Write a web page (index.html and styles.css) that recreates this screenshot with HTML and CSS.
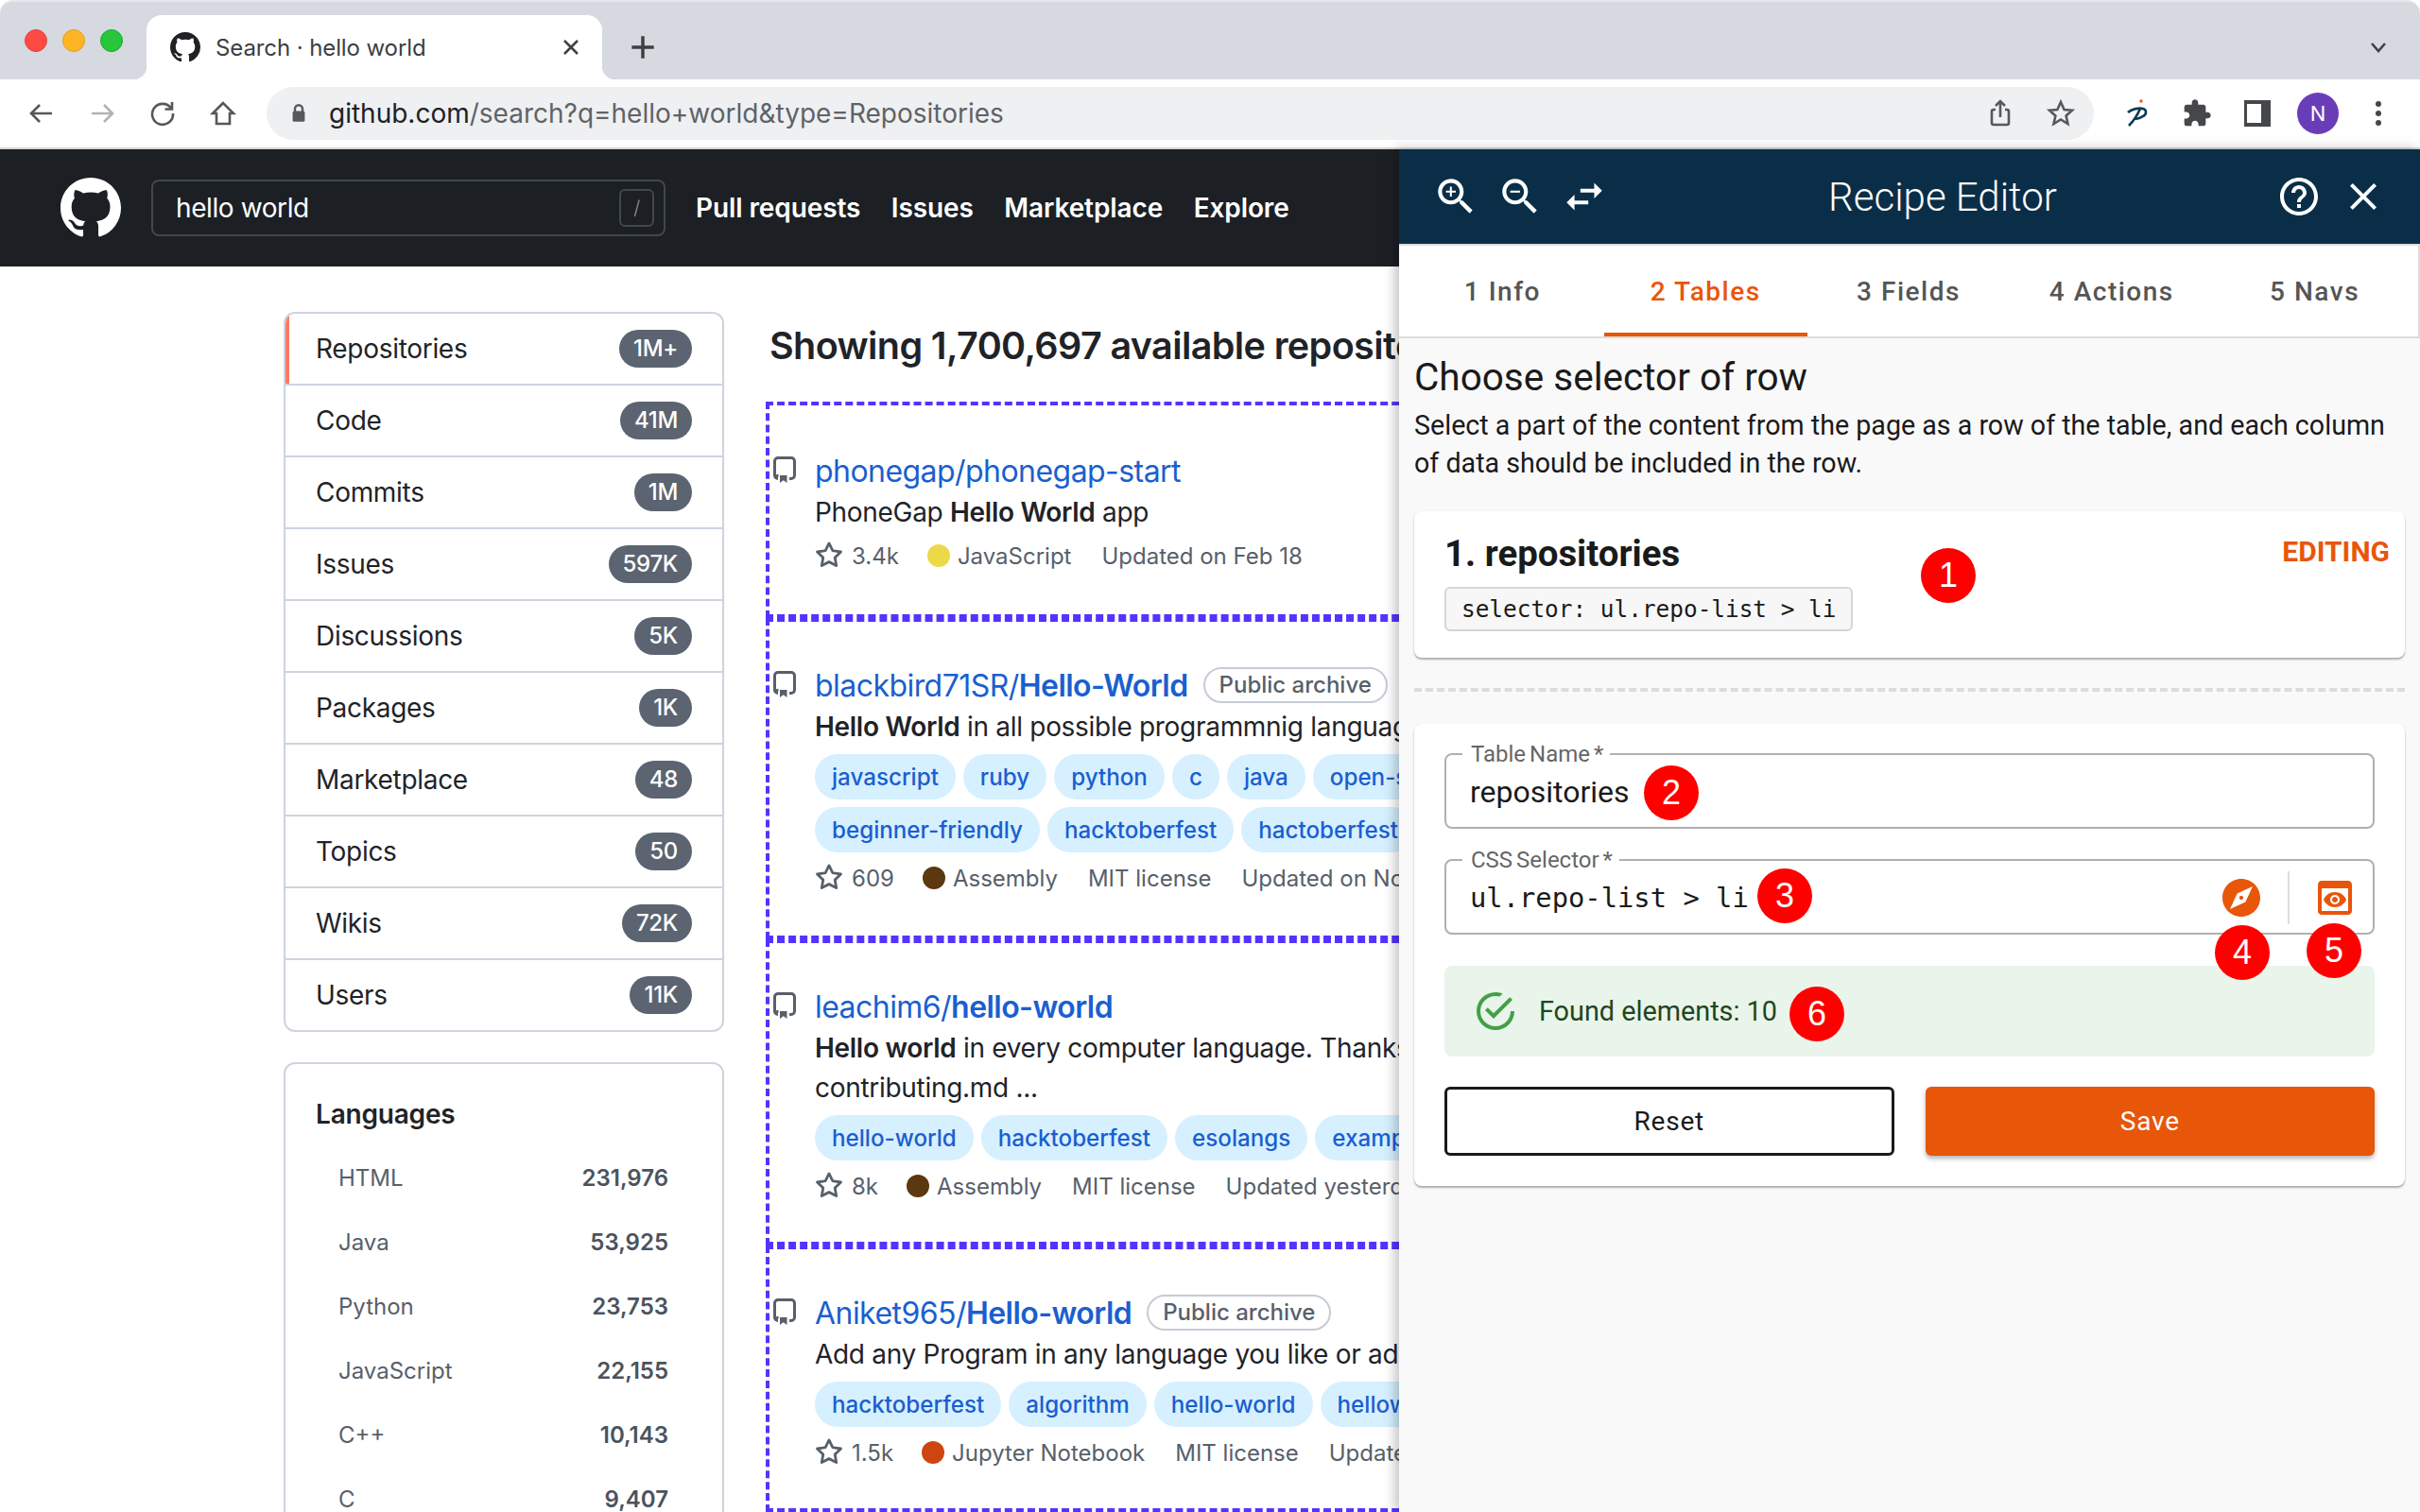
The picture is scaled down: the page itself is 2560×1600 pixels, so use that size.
FILE: index.html
```html
<!DOCTYPE html>
<html lang="en">
<head>
    <meta charset="UTF-8">
    <title>Search · hello world</title>
    <link rel="stylesheet" href="styles.css">
</head>
<body>

<svg class="defs" width="0" height="0">
    <symbol id="gh" viewBox="0 0 16 16"><path d="M8 0C3.58 0 0 3.58 0 8c0 3.54 2.29 6.53 5.47 7.59.4.07.55-.17.55-.38 0-.19-.01-.82-.01-1.49-2.01.37-2.53-.49-2.69-.94-.09-.23-.48-.94-.82-1.13-.28-.15-.68-.52-.01-.53.63-.01 1.08.58 1.23.82.72 1.21 1.87.87 2.33.66.07-.52.28-.87.51-1.07-1.78-.2-3.64-.89-3.64-3.95 0-.87.31-1.59.82-2.15-.08-.2-.36-1.02.08-2.12 0 0 .67-.21 2.2.82.64-.18 1.32-.27 2-.27.68 0 1.36.09 2 .27 1.53-1.04 2.2-.82 2.2-.82.44 1.1.16 1.92.08 2.12.51.56.82 1.27.82 2.15 0 3.07-1.87 3.75-3.65 3.95.29.25.54.73.54 1.48 0 1.07-.01 1.93-.01 2.2 0 .21.15.46.55.38A8.013 8.013 0 0016 8c0-4.42-3.58-8-8-8z"/></symbol>
    <symbol id="repo" viewBox="0 0 24 28"><path class="repo-line" d="M5 23.500C3 23.500 1.500 22 1.500 20V5A3.500 3.500 0 0 1 5 1.500h14A3.500 3.500 0 0 1 22.500 5v15c0 2-1.500 3.500-3.500 3.500h-2"/><path class="repo-line" d="M1.800 21.500C3 20.500 4 20.300 5.500 20.300"/><path d="M7 20h7.500v8l-3.750-2.800L7 28z"/></symbol>
    <symbol id="star" viewBox="0 0 16 16"><path d="M8 .25a.75.75 0 01.673.418l1.882 3.815 4.21.612a.75.75 0 01.416 1.279l-3.046 2.97.719 4.192a.75.75 0 01-1.088.791L8 12.347l-3.766 1.98a.75.75 0 01-1.088-.79l.72-4.194L.818 6.374a.75.75 0 01.416-1.28l4.21-.611L7.327.668A.75.75 0 018 .25zm0 2.445L6.615 5.5a.75.75 0 01-.564.41l-3.097.45 2.24 2.184a.75.75 0 01.216.664l-.528 3.084 2.769-1.456a.75.75 0 01.698 0l2.77 1.456-.53-3.084a.75.75 0 01.216-.664l2.24-2.183-3.096-.45a.75.75 0 01-.564-.41L8 2.694v.001z"/></symbol>
</svg>

<!-- browser chrome -->
<div class="tabstrip">
    <div class="lights">
        <span class="light red"></span>
        <span class="light yellow"></span>
        <span class="light green"></span>
    </div>
    <div class="tab">
        <svg class="tab-fav"><use href="#gh"/></svg>
        <span class="tab-title">Search · hello world</span>
        <svg class="tab-close" viewBox="0 0 24 24"><path d="M5 5l14 14M19 5L5 19"/></svg>
    </div>
    <svg class="tab-new" viewBox="0 0 24 24"><path d="M12 2v20M2 12h20"/></svg>
    <svg class="tab-list" viewBox="0 0 24 24"><path d="M5 8l7 8 7-8"/></svg>
</div>

<div class="toolbar">
    <span class="tool"><svg viewBox="0 0 32 32"><path d="M27 16H6M14 7l-9 9 9 9"/></svg></span>
    <span class="tool off"><svg viewBox="0 0 32 32"><path d="M5 16h21M18 7l9 9-9 9"/></svg></span>
    <span class="tool"><svg viewBox="0 0 32 32"><path d="M25 10.5A11 11 0 1 0 27 16M26 4v7.500h-7.500"/></svg></span>
    <span class="tool"><svg viewBox="0 0 32 32"><path d="M16 5L5 16h4v11h14V16h4z"/></svg></span>
    <div class="omnibox">
        <svg class="lock" viewBox="0 0 20 26"><path d="M5 11V7a5 5 0 0 1 10 0v4" class="lock-loop"/><rect x="2" y="10" width="16" height="14" rx="2"/></svg>
        <span class="url"><b>github.com</b>/search?q=hello+world&amp;type=Repositories</span>
        <span class="tool omni-tool"><svg viewBox="0 0 32 32"><path d="M11 12H9a2 2 0 0 0-2 2v12a2 2 0 0 0 2 2h14a2 2 0 0 0 2-2V14a2 2 0 0 0-2-2h-2M16 20V3M11 8l5-5 5 5"/></svg></span>
        <span class="tool omni-tool"><svg viewBox="0 0 32 32"><path d="M16 4l3.600 8 8.400.8-6.400 5.700 1.900 8.500-7.500-4.500L8.500 27l1.900-8.500L4 12.800l8.400-.8z"/></svg></span>
    </div>
    <span class="tool"><svg viewBox="0 0 32 32"><path class="ext-p" d="M7 15C11 11 19 10 23 11C27 12 27 17 23 19C20 21 16 22 13 22M20 11C17 18 12 25 8 29"/><circle class="ext-dot" cx="21" cy="3" r="1.700"/></svg></span>
    <span class="tool"><svg class="fill" viewBox="0 0 24 24"><path d="M20.500 11H19V7c0-1.100-.9-2-2-2h-4V3.500C13 2.120 11.880 1 10.500 1S8 2.120 8 3.500V5H4c-1.100 0-1.990.9-1.990 2v3.800H3.500c1.490 0 2.700 1.210 2.700 2.700s-1.210 2.700-2.700 2.700H2V20c0 1.100.9 2 2 2h3.800v-1.500c0-1.490 1.210-2.700 2.700-2.700 1.490 0 2.700 1.210 2.700 2.700V22H17c1.100 0 2-.9 2-2v-4h1.500c1.380 0 2.500-1.120 2.500-2.500S21.880 11 20.500 11z"/></svg></span>
    <span class="tool"><svg class="fill" viewBox="0 0 32 32"><path d="M2 2h28v28H2zM5 6v20h15V6z"/></svg></span>
    <span class="tool"><span class="avatar">N</span></span>
    <span class="tool"><svg class="fill" viewBox="0 0 32 32"><circle cx="16" cy="6" r="3"/><circle cx="16" cy="16" r="3"/><circle cx="16" cy="26" r="3"/></svg></span>
</div>

<!-- github page -->
<header class="gh-header">
    <svg class="gh-logo"><use href="#gh"/></svg>
    <div class="gh-search">
        <span>hello world</span>
        <span class="gh-slash">/</span>
    </div>
    <nav class="gh-nav">
        <a href="#">Pull requests</a>
        <a href="#">Issues</a>
        <a href="#">Marketplace</a>
        <a href="#">Explore</a>
    </nav>
</header>

<main class="gh-main">
    <aside class="side">
        <ul class="side-menu">
            <li class="selected">Repositories <span class="count">1M+</span></li>
            <li>Code <span class="count">41M</span></li>
            <li>Commits <span class="count">1M</span></li>
            <li>Issues <span class="count">597K</span></li>
            <li>Discussions <span class="count">5K</span></li>
            <li>Packages <span class="count">1K</span></li>
            <li>Marketplace <span class="count">48</span></li>
            <li>Topics <span class="count">50</span></li>
            <li>Wikis <span class="count">72K</span></li>
            <li>Users <span class="count">11K</span></li>
        </ul>
        <div class="langs">
            <h3>Languages</h3>
            <div class="lang"><span>HTML</span><b>231,976</b></div>
            <div class="lang"><span>Java</span><b>53,925</b></div>
            <div class="lang"><span>Python</span><b>23,753</b></div>
            <div class="lang"><span>JavaScript</span><b>22,155</b></div>
            <div class="lang"><span>C++</span><b>10,143</b></div>
            <div class="lang"><span>C</span><b>9,407</b></div>
        </div>
    </aside>

    <section class="results">
        <h2>Showing 1,700,697 available repository results</h2>

        <div class="repo first">
            <svg class="repo-icon"><use href="#repo"/></svg>
            <div class="repo-body">
                <div class="repo-title"><a href="#">phonegap/phonegap-start</a></div>
                <p class="repo-desc">PhoneGap <b>Hello World</b> app</p>
                <div class="repo-meta short">
                    <span class="stars"><svg><use href="#star"/></svg>3.4k</span>
                    <span class="lang-name"><i class="dot js"></i>JavaScript</span>
                    <span>Updated on Feb 18</span>
                </div>
            </div>
        </div>

        <div class="repo">
            <svg class="repo-icon"><use href="#repo"/></svg>
            <div class="repo-body">
                <div class="repo-title"><a href="#">blackbird71SR/<b>Hello-World</b></a><span class="archive">Public archive</span></div>
                <p class="repo-desc"><b>Hello World</b> in all possible programmnig languages</p>
                <div class="tags">
                    <a href="#">javascript</a><a href="#">ruby</a><a href="#">python</a><a href="#">c</a><a href="#">java</a><a href="#">open-source</a>
                </div>
                <div class="tags">
                    <a href="#">beginner-friendly</a><a href="#">hacktoberfest</a><a href="#">hactoberfest</a>
                </div>
                <div class="repo-meta">
                    <span class="stars"><svg><use href="#star"/></svg>609</span>
                    <span class="lang-name"><i class="dot asm"></i>Assembly</span>
                    <span>MIT license</span>
                    <span>Updated on Nov 2</span>
                </div>
            </div>
        </div>

        <div class="repo tight">
            <svg class="repo-icon"><use href="#repo"/></svg>
            <div class="repo-body">
                <div class="repo-title"><a href="#">leachim6/<b>hello-world</b></a></div>
                <p class="repo-desc"><b>Hello world</b> in every computer language. Thanks to<br>contributing.md ...</p>
                <div class="tags">
                    <a href="#">hello-world</a><a href="#">hacktoberfest</a><a href="#">esolangs</a><a href="#">examples</a>
                </div>
                <div class="repo-meta">
                    <span class="stars"><svg><use href="#star"/></svg>8k</span>
                    <span class="lang-name"><i class="dot asm"></i>Assembly</span>
                    <span>MIT license</span>
                    <span>Updated yesterday</span>
                </div>
            </div>
        </div>

        <div class="repo tight">
            <svg class="repo-icon"><use href="#repo"/></svg>
            <div class="repo-body">
                <div class="repo-title"><a href="#">Aniket965/<b>Hello-world</b></a><span class="archive">Public archive</span></div>
                <p class="repo-desc">Add any Program in any language you like or add</p>
                <div class="tags">
                    <a href="#">hacktoberfest</a><a href="#">algorithm</a><a href="#">hello-world</a><a href="#">helloworld</a>
                </div>
                <div class="repo-meta">
                    <span class="stars"><svg><use href="#star"/></svg>1.5k</span>
                    <span class="lang-name"><i class="dot nb"></i>Jupyter Notebook</span>
                    <span>MIT license</span>
                    <span>Updated on</span>
                </div>
            </div>
        </div>
    </section>
</main>

<!-- recipe editor side panel, sits over the page -->
<aside class="editor">
    <div class="editor-head">
        <div class="head-tools zoom-tools">
            <svg viewBox="0 0 24 24"><path d="M15.500 14h-.79l-.28-.27C15.410 12.590 16 11.110 16 9.500 16 5.910 13.090 3 9.500 3S3 5.910 3 9.500 5.910 16 9.500 16c1.610 0 3.090-.59 4.230-1.570l.27.28v.79l5 4.990L20.490 19l-4.990-5zm-6 0C7.010 14 5 11.990 5 9.500S7.010 5 9.500 5 14 7.010 14 9.500 11.990 14 9.500 14z"/><path d="M12 10h-2v2H9v-2H7V9h2V7h1v2h2v1z"/></svg>
            <svg viewBox="0 0 24 24"><path d="M15.500 14h-.79l-.28-.27C15.410 12.590 16 11.110 16 9.500 16 5.910 13.090 3 9.500 3S3 5.910 3 9.500 5.910 16 9.500 16c1.610 0 3.090-.59 4.230-1.570l.27.28v.79l5 4.990L20.490 19l-4.990-5zm-6 0C7.010 14 5 11.990 5 9.500S7.010 5 9.500 5 14 7.010 14 9.500 11.990 14 9.500 14z"/><path d="M7 9h5v1H7z"/></svg>
            <svg viewBox="0 0 24 24"><path d="M6.990 11 3 15l3.990 4v-3H14v-2H6.990v-3zM21 9l-3.990-4v3H10v2h7.010v3L21 9z"/></svg>
        </div>
        <div class="head-title">Recipe Editor</div>
        <div class="head-tools">
            <svg viewBox="0 0 24 24"><path d="M11 18h2v-2h-2v2zm1-16C6.480 2 2 6.480 2 12s4.480 10 10 10 10-4.480 10-10S17.520 2 12 2zm0 18c-4.410 0-8-3.590-8-8s3.590-8 8-8 8 3.590 8 8-3.590 8-8 8zm0-14c-2.210 0-4 1.790-4 4h2c0-1.100.9-2 2-2s2 .9 2 2c0 2-3 1.750-3 5h2c0-2.250 3-2.500 3-5 0-2.210-1.790-4-4-4z"/></svg>
            <svg viewBox="0 0 24 24"><path d="M19 6.410 17.590 5 12 10.590 6.410 5 5 6.410 10.590 12 5 17.590 6.410 19 12 13.410 17.590 19 19 17.590 13.410 12z"/></svg>
        </div>
    </div>

    <div class="steps">
        <div class="step">1 Info</div>
        <div class="step active">2 Tables</div>
        <div class="step">3 Fields</div>
        <div class="step">4 Actions</div>
        <div class="step">5 Navs</div>
    </div>

    <div class="editor-body">
        <h2 class="editor-title">Choose selector of row</h2>
        <p class="editor-desc">Select a part of the content from the page as a row of the table, and each column of data should be included in the row.</p>

        <div class="card table-card">
            <div class="table-card-top">
                <h3>1. repositories</h3>
                <span class="editing">EDITING</span>
            </div>
            <code class="selector-chip">selector: ul.repo-list &gt; li</code>
        </div>

        <hr class="dashes">

        <div class="card form-card">
            <fieldset class="field">
                <legend>Table Name *</legend>
                <span class="field-value">repositories</span>
            </fieldset>
            <fieldset class="field">
                <legend>CSS Selector *</legend>
                <span class="field-value mono">ul.repo-list &gt; li</span>
                <svg class="field-icon compass" viewBox="2 2 20 20"><path d="M12 10.900c-.61 0-1.100.49-1.100 1.100s.49 1.100 1.100 1.100c.61 0 1.100-.49 1.100-1.100s-.49-1.100-1.100-1.100zM12 2C6.480 2 2 6.480 2 12s4.480 10 10 10 10-4.480 10-10S17.520 2 12 2zm2.190 12.190L6 18l3.810-8.190L18 6l-3.810 8.190z"/></svg>
                <span class="field-sep"></span>
                <svg class="field-icon preview" viewBox="3 3 18 18"><path d="M19 3H5c-1.110 0-2 .9-2 2v14c0 1.100.89 2 2 2h14c1.100 0 2-.9 2-2V5c0-1.100-.89-2-2-2zm0 16H5V7h14v12zm-5.500-6c0 .83-.67 1.500-1.500 1.500s-1.500-.67-1.500-1.500.67-1.500 1.500-1.500 1.500.67 1.500 1.500zM12 9c-2.730 0-5.060 1.660-6 4 .94 2.340 3.270 4 6 4s5.060-1.660 6-4c-.94-2.340-3.270-4-6-4zm0 6.500c-1.380 0-2.500-1.120-2.500-2.500s1.120-2.500 2.500-2.500 2.500 1.120 2.500 2.500-1.120 2.500-2.500 2.500z"/></svg>
            </fieldset>
            <div class="found">
                <svg viewBox="2 2 20 20"><path d="M20,12A8,8 0 0,1 12,20A8,8 0 0,1 4,12A8,8 0 0,1 12,4C12.760,4 13.500,4.110 14.200,4.310L15.770,2.740C14.610,2.260 13.340,2 12,2A10,10 0 0,0 2,12A10,10 0 0,0 12,22A10,10 0 0,0 22,12M7.910,10.080L6.500,11.500L11,16L21,6L19.590,4.580L11,13.170L7.910,10.080Z"/></svg>
                <span>Found elements: 10</span>
            </div>
            <div class="form-buttons">
                <button class="btn-reset">Reset</button>
                <button class="btn-save">Save</button>
            </div>
        </div>
    </div>

    <!-- numbered callouts -->
    <span class="pin pin-1">1</span>
    <span class="pin pin-2">2</span>
    <span class="pin pin-3">3</span>
    <span class="pin pin-4">4</span>
    <span class="pin pin-5">5</span>
    <span class="pin pin-6">6</span>
</aside>

</body>
</html>
```

FILE: styles.css
```css
* {
    box-sizing: border-box;
}

html, body {
    margin: 0;
    padding: 0;
}

body {
    position: relative;
    width: 2560px;
    height: 1600px;
    overflow: hidden;
    background: #fff;
    font-family: Inter, "Liberation Sans", sans-serif;
    color: #1f2328;
}

a {
    text-decoration: none;
    color: inherit;
}

.defs {
    position: absolute;
}

/* browser chrome */
.tabstrip {
    display: flex;
    height: 84px;
    background: #d6d9e0;
    border-top: 2px solid #e6e7ea;
    border-radius: 14px 14px 0 0;
    padding-left: 26px;
}

.lights {
    display: flex;
    gap: 16px;
    margin-top: 29px;
    margin-right: 25px;
}

.light {
    width: 24px;
    height: 24px;
    border-radius: 50%;
}

.red { background: #fe4a45; border: 1px solid #e0443e; }
.yellow { background: #fdb425; border: 1px solid #dea123; }
.green { background: #28c63a; border: 1px solid #1aab29; }

.tab {
    position: relative;
    display: flex;
    align-items: center;
    width: 482px;
    height: 68px;
    margin-top: 14px;
    padding: 0 24px 0 25px;
    background: #fff;
    border-radius: 16px 16px 0 0;
}

.tab::before,
.tab::after {
    content: "";
    position: absolute;
    bottom: 0;
    width: 14px;
    height: 14px;
}

.tab::before {
    left: -14px;
    background: radial-gradient(circle at 0 0, transparent 14px, #fff 14.5px);
}

.tab::after {
    right: -14px;
    background: radial-gradient(circle at 100% 0, transparent 14px, #fff 14.5px);
}

.tab-fav {
    width: 32px;
    height: 32px;
    fill: #202124;
}

.tab-title {
    margin-left: 16px;
    font-size: 24px;
    letter-spacing: -0.1px;
    color: #3c4043;
}

.tab-close {
    width: 24px;
    height: 24px;
    margin-left: auto;
    margin-right: -3px;
    fill: none;
    stroke: #3c4043;
    stroke-width: 2.5;
}

.tab-new {
    width: 28px;
    height: 28px;
    margin: 34px 0 0 29px;
    fill: none;
    stroke: #3c4043;
    stroke-width: 3;
}

.tab-list {
    width: 24px;
    height: 24px;
    margin: 36px 32px 0 auto;
    fill: none;
    stroke: #3c4043;
    stroke-width: 2.500;
}

.toolbar {
    display: flex;
    align-items: center;
    height: 74px;
    padding: 0 12px;
    background: #fff;
    border-bottom: 2px solid #d5d5d5;
}

.tool {
    display: flex;
    align-items: center;
    justify-content: center;
    flex: none;
    width: 64px;
    height: 64px;
}

.tool svg {
    width: 32px;
    height: 32px;
    fill: none;
    stroke: #55585c;
    stroke-width: 2.600;
}

.tool svg.fill {
    fill: #45474a;
    stroke: none;
}

.tool.off svg {
    stroke: #b0b2b5;
}

.ext-p {
    stroke: #0b3a55;
}

.ext-dot {
    fill: #f0570f;
    stroke: none;
}

.omnibox {
    display: flex;
    align-items: center;
    flex: 1;
    height: 56px;
    margin: 0 13px 0 14px;
    padding: 0 3px 0 26px;
    background: #eff0f2;
    border-radius: 28px;
}

.lock {
    width: 16px;
    height: 22px;
    fill: #55585c;
}

.lock-loop {
    fill: none;
    stroke: #55585c;
    stroke-width: 3;
}

.url {
    flex: 1;
    margin-left: 24px;
    font-size: 28px;
    color: #5f6368;
}

.url b {
    font-weight: 400;
    color: #202124;
}

.avatar {
    display: flex;
    align-items: center;
    justify-content: center;
    width: 44px;
    height: 44px;
    border-radius: 50%;
    background: #6a3db8;
    color: #fff;
    font-size: 22px;
}

/* github header */
.gh-header {
    display: flex;
    align-items: center;
    height: 124px;
    padding-left: 64px;
    background: #1c1f24;
    color: #fff;
}

.gh-logo {
    width: 64px;
    height: 64px;
    fill: #fff;
}

.gh-search {
    display: flex;
    align-items: center;
    justify-content: space-between;
    width: 544px;
    height: 60px;
    margin-left: 32px;
    padding: 0 10px 0 24px;
    border: 2px solid #41474e;
    border-radius: 8px;
    font-size: 28px;
    letter-spacing: -0.4px;
}

.gh-slash {
    display: flex;
    align-items: center;
    justify-content: center;
    width: 37px;
    height: 40px;
    border: 2px solid #41474e;
    border-radius: 6px;
    font-size: 20px;
    font-weight: 300;
    color: #8b949e;
}

.gh-nav {
    display: flex;
    gap: 32.500px;
    margin-left: 32px;
    font-size: 28px;
    font-weight: 600;
    letter-spacing: -0.1px;
}

/* github main */
.gh-main {
    display: flex;
    align-items: flex-start;
    height: 1318px;
    overflow: hidden;
    padding: 48px 0 0 300px;
}

.side {
    flex: none;
    width: 466px;
}

.side-menu {
    list-style: none;
    margin: 0;
    padding: 0;
    border: 2px solid #cdd4de;
    border-radius: 12px;
    overflow: hidden;
    font-size: 28px;
    letter-spacing: -0.3px;
}

.side-menu li {
    display: flex;
    align-items: center;
    justify-content: space-between;
    height: 76px;
    padding: 0 32px;
    border-bottom: 2px solid #cdd4de;
}

.side-menu li:last-child {
    height: 74px;
    border-bottom: none;
}

.side-menu li.selected {
    box-shadow: inset 4px 0 0 #fb7a65;
}

.count {
    height: 40px;
    padding: 0 15px;
    border-radius: 20px;
    background: #5b6470;
    color: #fff;
    font-size: 24px;
    font-weight: 500;
    line-height: 40px;
}

.langs {
    height: 600px;
    margin-top: 32px;
    padding: 35px 57px 0 32px;
    border: 2px solid #cdd4de;
    border-radius: 12px;
}

.langs h3 {
    margin: 0 0 16px;
    font-size: 28px;
    font-weight: 600;
    letter-spacing: -0.2px;
    line-height: 36px;
}

.lang {
    display: flex;
    justify-content: space-between;
    height: 68px;
    padding-left: 24px;
    font-size: 24px;
    line-height: 68px;
    color: #57606a;
}

.lang b {
    font-weight: 600;
    color: #4a535e;
}

.results {
    flex: none;
    width: 1200px;
    margin-left: 44px;
}

.results h2 {
    margin: 12px 0 35px 4px;
    font-size: 39.500px;
    font-weight: 600;
    letter-spacing: -0.6px;
    line-height: 48px;
    white-space: nowrap;
}

.repo {
    display: flex;
    border: 4px dashed #5533ff;
    padding: 47px 0 44px;
}

.repo.first {
    padding: 49px 0 45px;
}

.repo.tight {
    padding-bottom: 42px;
}

.repo-icon {
    flex: none;
    width: 24px;
    height: 28px;
    margin: 5px 20px 0 4px;
    fill: #57606a;
}

.repo-line {
    fill: none;
    stroke: #57606a;
    stroke-width: 3;
}

.repo-body {
    white-space: nowrap;
}

.repo-title {
    display: flex;
    align-items: center;
    gap: 16px;
    height: 40px;
    font-size: 32px;
    letter-spacing: -0.55px;
    color: #1a5fd0;
}

.repo-title b {
    font-weight: 600;
}

.archive {
    height: 38px;
    padding: 0 15px;
    border: 2px solid #c5ccd6;
    border-radius: 19px;
    font-size: 24px;
    font-weight: 500;
    letter-spacing: 0;
    line-height: 34px;
    color: #57606a;
}

.repo-desc {
    margin: 3px 0 0;
    font-size: 28px;
    letter-spacing: -0.3px;
    line-height: 42px;
}

.repo-desc b {
    font-weight: 600;
}

.tags {
    display: flex;
    gap: 8px;
    margin-top: 8px;
}

.tags a {
    height: 48px;
    padding: 0 18px;
    border-radius: 24px;
    background: #d6f0ff;
    color: #1a5fd0;
    font-size: 24.200px;
    font-weight: 500;
    line-height: 49px;
}

.repo-meta {
    display: flex;
    align-items: center;
    gap: 32px;
    height: 34px;
    margin-top: 10px;
    font-size: 24px;
    color: #57606a;
}

.repo-meta.short {
    margin-top: 8px;
}

.stars,
.lang-name {
    display: flex;
    align-items: center;
}

.stars {
    margin-right: -2px;
}

.stars svg {
    width: 30px;
    height: 30px;
    margin-right: 9px;
    fill: #57606a;
}

.dot {
    width: 24px;
    height: 24px;
    margin-right: 8px;
    border-radius: 50%;
}

.js { background: #ecd94a; }
.asm { background: #5b3810; }
.nb { background: #cf4510; }

/* recipe editor panel */
.editor {
    position: absolute;
    left: 1480px;
    top: 158px;
    right: 0;
    bottom: 0;
    display: flex;
    flex-direction: column;
    background: #f9f9f9;
    box-shadow: -4px 0 12px rgba(0, 0, 0, 0.25);
    font-family: Roboto, "Liberation Sans", sans-serif;
    color: #1a1a1a;
}

.editor-head {
    position: relative;
    display: flex;
    align-items: center;
    justify-content: space-between;
    height: 100px;
    padding: 0 36px 0 35px;
    background: #0a2e47;
    color: #fff;
}

.head-tools {
    display: flex;
    gap: 20px;
}

.head-tools svg {
    width: 48px;
    height: 48px;
    fill: #fff;
}

.zoom-tools {
    gap: 18px;
}

.zoom-tools svg {
    width: 50px;
    height: 50px;
}

.head-title {
    position: absolute;
    left: 70px;
    right: 0;
    text-align: center;
    font-size: 42px;
    font-weight: 300;
}

.steps {
    display: flex;
    height: 100px;
    padding: 0 2px;
    background: #fff;
    border-right: 2px solid #dcdcdc;
    border-bottom: 2px solid #dcdcdc;
    border-top: 2px solid #dcdcdc;
}

.step {
    flex: 1;
    display: flex;
    align-items: center;
    justify-content: center;
    height: 96px;
    padding-top: 4px;
    border-bottom: 4px solid transparent;
    font-size: 28px;
    font-weight: 500;
    letter-spacing: 1.5px;
    color: #555;
}

.step.active {
    color: #e8560a;
    border-bottom-color: #e8560a;
}

.editor-body {
    padding: 17px 16px 0;
}

.editor-title {
    margin: 0;
    font-size: 40.500px;
    font-weight: 400;
    line-height: 48px;
}

.editor-desc {
    margin: 7px 0 0;
    font-size: 28.650px;
    line-height: 40px;
}

.card {
    background: #fff;
    border-radius: 8px;
    box-shadow: 0 2px 2px rgba(0, 0, 0, 0.3), 0 0 2px rgba(0, 0, 0, 0.06);
}

.table-card {
    height: 155px;
    margin-top: 31px;
    padding: 24px 16px 0 32px;
}

.table-card-top {
    display: flex;
    justify-content: space-between;
}

.table-card-top h3 {
    margin: 0;
    font-size: 38.400px;
    font-weight: 700;
    line-height: 42px;
}

.editing {
    font-size: 30px;
    font-weight: 700;
    line-height: 38px;
    color: #e8560a;
}

.selector-chip {
    display: inline-block;
    height: 47px;
    margin-top: 14px;
    padding: 0 16px;
    background: #f7f7f7;
    border: 2px solid #d5d5d5;
    border-radius: 6px;
    font-family: "DejaVu Sans Mono", monospace;
    font-size: 24.400px;
    line-height: 43px;
}

.dashes {
    height: 0;
    margin: 32px 0 34px;
    border: none;
    border-top: 4px dashed #dcdcdc;
}

.form-card {
    height: 489px;
    padding: 22px 32px 0;
}

.field {
    position: relative;
    display: flex;
    align-items: center;
    height: 89px;
    min-width: 0;
    margin: 0 0 23px;
    padding: 0 24px 0 25px;
    border: 2px solid #b0b0b0;
    border-radius: 8px;
}

.field legend {
    margin-left: -8px;
    padding: 0 7px 0 9px;
    font-size: 24px;
    word-spacing: -2px;
    line-height: 20px;
    color: #666;
}

.field-value {
    flex: 1;
    margin-top: -8px;
    font-size: 32px;
}

.field-value.mono {
    font-family: "DejaVu Sans Mono", monospace;
    font-size: 28.800px;
}

.field-icon {
    flex: none;
    margin-top: -8px;
    fill: #e8560a;
}

.compass {
    width: 40px;
    height: 40px;
}

.preview {
    width: 36px;
    height: 36px;
    margin-right: -2px;
}

.field-sep {
    flex: none;
    width: 2px;
    height: 56px;
    margin: -8px 30px 0 29px;
    background: #dedede;
}

.found {
    display: flex;
    align-items: center;
    height: 96px;
    margin-top: 33px;
    padding-left: 34px;
    background: #e9f4ea;
    border-radius: 8px;
    font-size: 28.800px;
    color: #1e4620;
}

.found svg {
    width: 40px;
    height: 40px;
    margin-right: 26px;
    fill: #43a047;
}

.form-buttons {
    display: grid;
    grid-template-columns: 1fr 1fr;
    gap: 33px;
    margin-top: 32px;
}

.form-buttons button {
    height: 73px;
    border-radius: 6px;
    font-family: inherit;
    font-size: 28px;
    letter-spacing: 0.8px;
}

.btn-reset {
    background: #fff;
    border: 3px solid #1a1a1a;
    color: #1a1a1a;
}

.btn-save {
    background: #e8560a;
    border: none;
    color: #fff;
    box-shadow: 0 3px 5px rgba(0, 0, 0, 0.3);
}

/* numbered callouts over the panel */
.pin {
    position: absolute;
    display: flex;
    align-items: center;
    justify-content: center;
    width: 58px;
    height: 58px;
    border-radius: 50%;
    background: #fe0000;
    color: #fff;
    font-family: "Liberation Sans", sans-serif;
    font-size: 36px;
}

.pin-1 { left: 552px; top: 422px; }
.pin-2 { left: 259px; top: 652px; }
.pin-3 { left: 379px; top: 761px; }
.pin-4 { left: 863px; top: 821px; }
.pin-5 { left: 960px; top: 819px; }
.pin-6 { left: 413px; top: 886px; }
```
